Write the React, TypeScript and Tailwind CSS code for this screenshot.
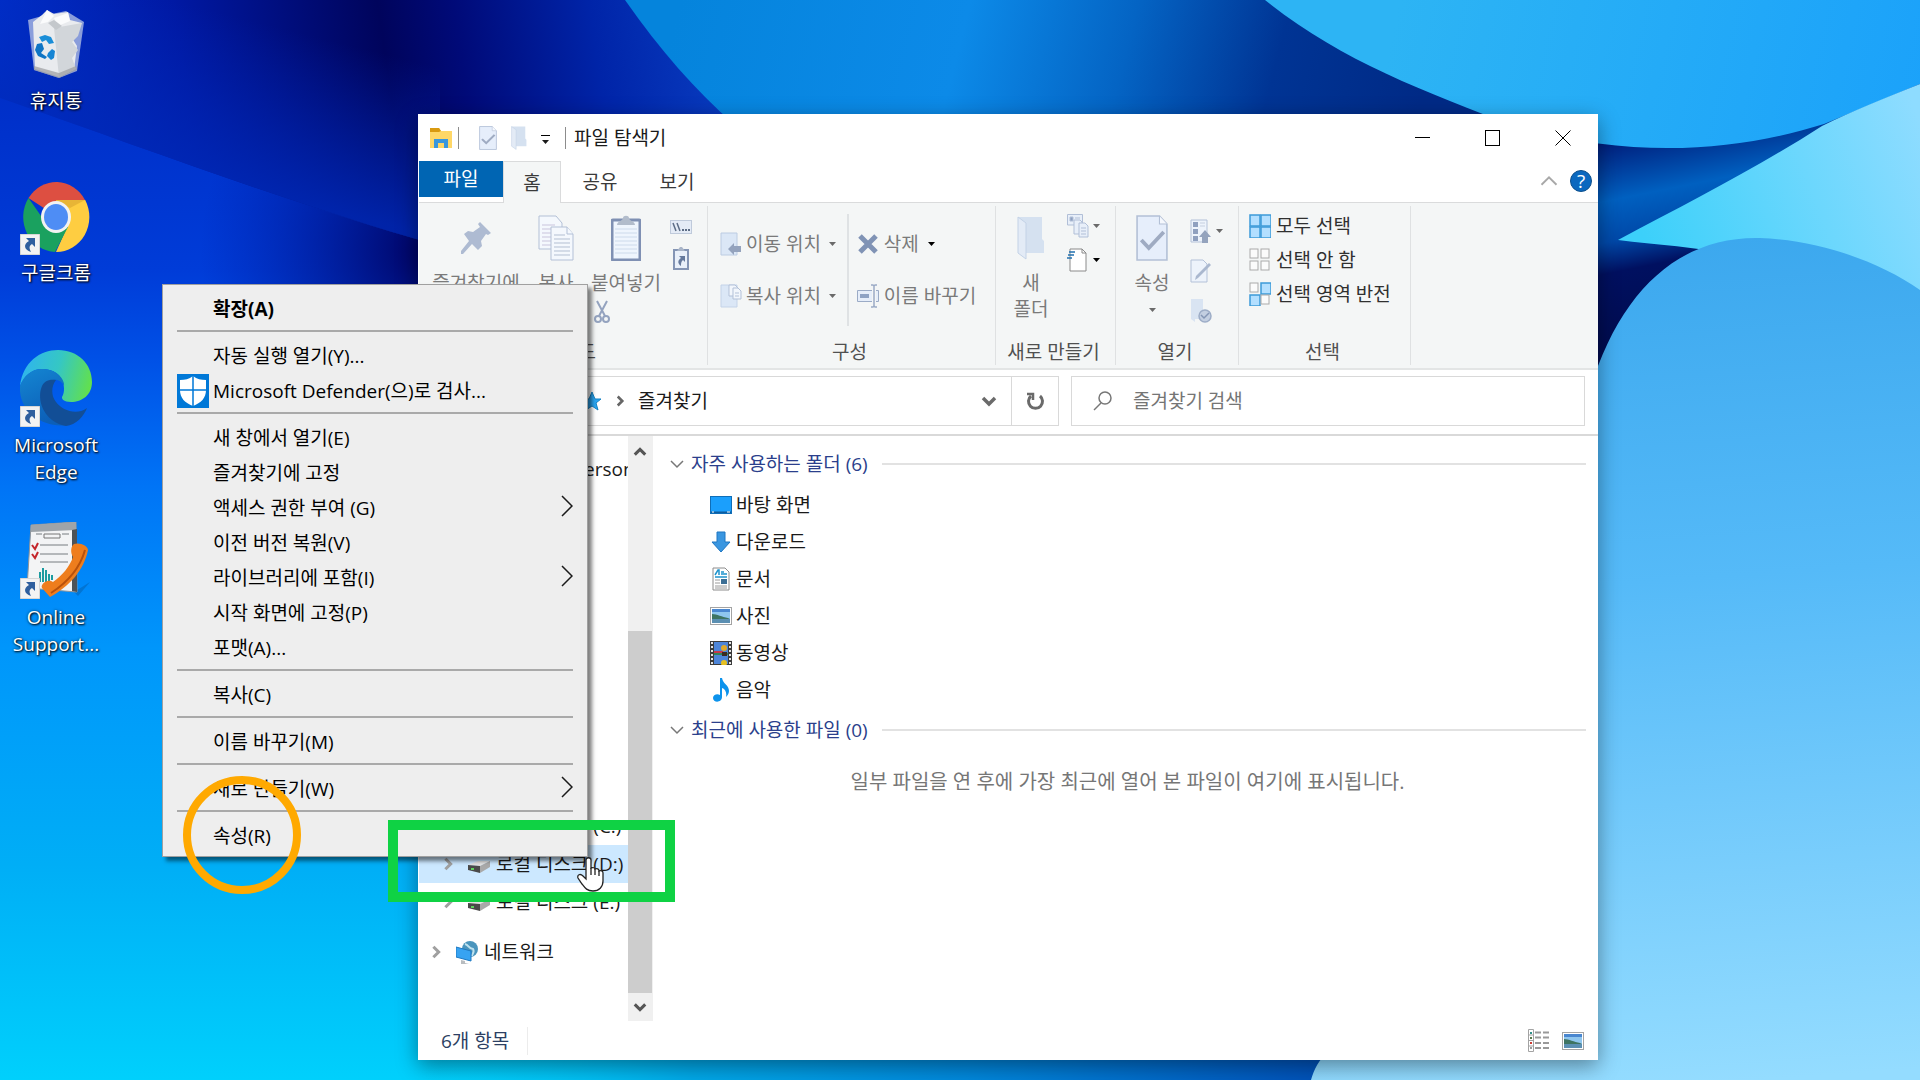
import * as React from 'react'
import { clsx } from 'clsx'

type IconProps = { className?: string }

function Wallpaper() {
  return (
    <svg
      aria-hidden="true"
      className="absolute inset-0 h-full w-full"
      viewBox="0 0 1920 1080"
      preserveAspectRatio="xMidYMid slice"
    >
      <defs>
        <linearGradient id="w-base" x1="0" y1="0" x2="0" y2="1">
          <stop offset="0" stopColor="#0028c0" />
          <stop offset="0.25" stopColor="#003cd8" />
          <stop offset="0.33" stopColor="#0050e6" />
          <stop offset="0.45" stopColor="#0074f6" />
          <stop offset="0.6" stopColor="#0096fb" />
          <stop offset="0.8" stopColor="#00aef6" />
          <stop offset="1" stopColor="#00d0fc" />
        </linearGradient>
        <linearGradient id="w-top" gradientUnits="userSpaceOnUse" x1="0" y1="110" x2="740" y2="0">
          <stop offset="0" stopColor="#0030cc" />
          <stop offset="0.25" stopColor="#0019a4" />
          <stop offset="0.52" stopColor="#00045c" />
          <stop offset="0.62" stopColor="#000a78" />
          <stop offset="0.8" stopColor="#0024a8" />
          <stop offset="1" stopColor="#0a40c4" />
        </linearGradient>
        <linearGradient id="w-top-lift" gradientUnits="userSpaceOnUse" x1="330" y1="40" x2="290" y2="200">
          <stop offset="0" stopColor="#0028b8" stopOpacity="0" />
          <stop offset="1" stopColor="#002ab8" stopOpacity="0.8" />
        </linearGradient>
        <radialGradient id="w-shade" gradientUnits="userSpaceOnUse" cx="430" cy="250" r="230">
          <stop offset="0" stopColor="#00005c" />
          <stop offset="1" stopColor="#0018a0" stopOpacity="0" />
        </radialGradient>
        <linearGradient id="w-mid" gradientUnits="userSpaceOnUse" x1="680" y1="0" x2="1400" y2="180">
          <stop offset="0" stopColor="#0584dc" />
          <stop offset="0.38" stopColor="#0c8ae8" />
          <stop offset="0.6" stopColor="#0464c4" />
          <stop offset="0.8" stopColor="#003494" />
          <stop offset="1" stopColor="#002a86" />
        </linearGradient>
        <linearGradient id="w-azure" gradientUnits="userSpaceOnUse" x1="1400" y1="0" x2="1920" y2="120">
          <stop offset="0" stopColor="#2db4f4" />
          <stop offset="1" stopColor="#1ba2fa" />
        </linearGradient>
        <linearGradient id="w-dark" gradientUnits="userSpaceOnUse" x1="1600" y1="140" x2="1640" y2="340">
          <stop offset="0" stopColor="#001a78" />
          <stop offset="0.3" stopColor="#0060c0" />
          <stop offset="0.5" stopColor="#0048a8" />
          <stop offset="0.65" stopColor="#001060" />
          <stop offset="1" stopColor="#000c50" />
        </linearGradient>
        <linearGradient id="w-wedge" gradientUnits="userSpaceOnUse" x1="1640" y1="230" x2="1920" y2="120">
          <stop offset="0" stopColor="#3cd0fa" />
          <stop offset="1" stopColor="#8edcff" />
        </linearGradient>
        <linearGradient id="w-right" gradientUnits="userSpaceOnUse" x1="1700" y1="240" x2="1760" y2="1080">
          <stop offset="0" stopColor="#3ca8ee" />
          <stop offset="0.4" stopColor="#55baf8" />
          <stop offset="1" stopColor="#94dcff" />
        </linearGradient>
        <linearGradient id="w-foot" x1="0" y1="0" x2="1" y2="0">
          <stop offset="0" stopColor="#00c8f8" stopOpacity="0" />
          <stop offset="0.3" stopColor="#00a8e8" />
          <stop offset="0.6" stopColor="#0088dc" />
          <stop offset="1" stopColor="#0050b8" />
        </linearGradient>
      </defs>
      <rect width="1920" height="1080" fill="url(#w-base)" />
      <path d="M0 98C150 150 280 200 440 246V480H200Z" fill="url(#w-shade)" />
      <path d="M0 98V0H760V300L440 246C280 200 150 150 0 98Z" fill="url(#w-top)" />
      <path d="M0 98V0H440V246C280 200 150 150 0 98Z" fill="url(#w-top-lift)" />
      <path d="M625 0C660 50 695 90 735 125H1600V0Z" fill="url(#w-mid)" />
      <path d="M1590 60H1920V400H1590Z" fill="url(#w-dark)" />
      <path d="M1265 0C1340 60 1420 90 1520 128C1640 160 1740 150 1824 124L1920 84V0Z" fill="url(#w-azure)" />
      <path d="M1920 84C1885 98 1850 112 1822 126C1760 166 1690 202 1618 240C1700 250 1800 250 1920 330Z" fill="url(#w-wedge)" />
      <path d="M1590 390C1620 290 1680 236 1760 238C1820 240 1880 262 1920 290V1080H1300L1310 1040Z" fill="url(#w-right)" />
      <path d="M420 1050H1330C1318 1060 1314 1070 1311 1080H420Z" fill="url(#w-foot)" />
    </svg>
  )
}

function RecycleBinIcon() {
  return (
    <svg aria-hidden="true" className="h-[72px] w-[72px]" viewBox="0 0 72 72">
      <path d="M8 12L22 8L46 3L64 14L57 63L39 70L14 62Z" fill="#b8c6e6" opacity="0.75" />
      <path d="M13 14L22 7L27 2L34 6L48 4L50 12L62 15L52 30L57 38L54 62L39 69L15 61Z" fill="#e9ebee" />
      <path d="M27 2L34 8L28 14L20 16Z M48 5L50 13L38 18L34 10Z" fill="#fafbfc" />
      <path d="M34 20L62 15L58 28L52 34L58 42L52 50L56 61L39 69Z" fill="#d2d6da" />
      <path d="M28 15L34 12L42 18L36 22Z" fill="#c4c8cc" />
      <path d="M14 62L39 70L57 62L56 58L39 65L14 58Z" fill="#9b9d9f" opacity="0.7" />
      <path d="M19 29L25 27L31 29L34 35L29 36L26 32L22 34Z" fill="#1a8ed8" />
      <path d="M17 36L22 35L24 41L21 45L27 49L25 51L18 48L15 42Z" fill="#0f74c4" />
      <path d="M28 45L32 41L35 43L34 50L31 52L27 48Z" fill="#1685d4" />
    </svg>
  )
}

function ChromeIcon() {
  return (
    <svg aria-hidden="true" className="h-[72px] w-[72px]" viewBox="0 0 72 72">
      <path d="M36 36L8.500 18A33 35 0 0 1 65 20Z" fill="#dd4f41" />
      <path d="M36 20H65.200A33 35 0 0 1 36 72L48 45Z" fill="#fecd41" />
      <path d="M8.500 18A33 35 0 0 0 35 72L48 47L28 46Z" fill="#1aa15f" />
      <path d="M36 20H65L50 28Z" fill="#d9a52f" opacity="0.6" />
      <ellipse cx="36" cy="37" rx="15" ry="16" fill="#f2f2f2" />
      <ellipse cx="36" cy="37" rx="12" ry="13" fill="#4e8df5" />
    </svg>
  )
}

function EdgeIcon() {
  return (
    <svg aria-hidden="true" className="h-[76px] w-[72px]" viewBox="0 0 72 76">
      <defs>
        <linearGradient id="e-top" x1="0" y1="0.4" x2="1" y2="0.6">
          <stop offset="0" stopColor="#2fb4ee" />
          <stop offset="0.5" stopColor="#35c7c4" />
          <stop offset="1" stopColor="#63e04c" />
        </linearGradient>
        <linearGradient id="e-mid" x1="0" y1="0" x2="0.4" y2="1">
          <stop offset="0" stopColor="#1486d2" />
          <stop offset="1" stopColor="#0c5fb8" />
        </linearGradient>
      </defs>
      <path d="M0 36C3 12 20 0 38 0C58 0 72 14 72 32C72 45 62 52 51 52C44 52 40 49 43 45C46 39 44 20 24 19C12 18 4 26 0 36Z" fill="url(#e-top)" />
      <path d="M0 36C4 24 14 18 24 19C38 20 45 30 44 36C42 31 37 29 33 30C24 32 20 42 24 54C28 66 38 74 48 75C22 79 -2 60 0 36Z" fill="url(#e-mid)" />
      <path d="M22 36C16 50 24 72 46 76C56 75 64 66 67 58C56 66 42 60 36 52C31 46 31 36 36 30C28 29 24 32 22 36Z" fill="#124e96" />
    </svg>
  )
}

function SupportIcon() {
  return (
    <svg aria-hidden="true" className="h-[76px] w-[72px]" viewBox="0 0 72 76">
      <path d="M54 70L70 60L58 74Z" fill="#045fae" opacity="0.5" />
      <path d="M11 3L56 0L57 70L7 66Z" fill="#f3f4f5" stroke="#8f9499" />
      <path d="M11 3L56 0V8L11 10Z" fill="#9ea4a9" />
      <path d="M52 8L57 7V70L52 69Z" fill="#4d5358" />
      <path d="M24 12H40V16H24Z" fill="none" stroke="#777" />
      <path d="M16 12H22M42 12H49M20 23H48M20 32H48M20 40H48" stroke="#777c80" />
      <path d="M12 23L15 27L18 21M12 32L15 36L18 30" fill="none" stroke="#c4262b" strokeWidth="2" />
      <path d="M20 60V50M23 60V46M26 62V48M29 60V52M32 58V53" stroke="#1b9ca0" strokeWidth="2" />
      <path d="M54 22C60 20 68 24 68 28C64 48 50 64 30 75L22 66C20 62 28 56 33 60C42 54 50 44 53 35C50 30 51 24 54 22Z" fill="#ee7d1d" />
      <path d="M65 28C60 46 48 60 31 71" fill="none" stroke="#b8510c" strokeWidth="2" />
    </svg>
  )
}

function ShortcutBadge() {
  return (
    <svg aria-hidden="true" className="absolute -bottom-[3px] left-0 h-[21px] w-5" viewBox="0 0 20 21">
      <rect width="20" height="21" fill="#f3f3f3" stroke="#b9b9b9" />
      <path d="M6 4H15V13L12 10C9 12 9 14 11 18C4 16 3 10 9 7Z" fill="#2f5f9e" />
    </svg>
  )
}

const DESKTOP_ICONS = [
  { label: '휴지통', icon: <RecycleBinIcon />, shortcut: false },
  { label: '구글크롬', icon: <ChromeIcon />, shortcut: true },
  { label: 'Microsoft Edge', icon: <EdgeIcon />, shortcut: true },
  { label: 'Online Support...', icon: <SupportIcon />, shortcut: true },
]

function DesktopIcons() {
  return (
    <div className="relative flex w-28 flex-col">
      {DESKTOP_ICONS.map(({ label, icon, shortcut }) => (
        <button
          key={label}
          type="button"
          className="flex h-[172px] flex-col items-center gap-2 px-1 pt-2 leading-[27px] text-white [text-shadow:1px_1px_2px_#000,0_0_3px_rgba(0,0,0,0.6)]"
        >
          <span className="relative flex h-[72px] w-[72px] shrink-0 items-center justify-center">
            {icon}
            {shortcut && <ShortcutBadge />}
          </span>
          <span className="w-24">{label}</span>
        </button>
      ))}
    </div>
  )
}

function Caret({ className }: IconProps) {
  return (
    <svg aria-hidden="true" className={clsx('h-1 w-[7px] shrink-0', className)} viewBox="0 0 7 4" fill="currentColor">
      <path d="M0 0H7L3.500 4Z" />
    </svg>
  )
}

function Chevron({ className, thick }: IconProps & { thick?: boolean }) {
  return (
    <svg
      aria-hidden="true"
      className={clsx('shrink-0', className)}
      viewBox="0 0 16 16"
      fill="none"
      stroke="currentColor"
      strokeWidth={thick ? 3.5 : 1.5}
    >
      <path d="M2 5L8 11L14 5" />
    </svg>
  )
}

function ExplorerIcon() {
  return (
    <svg aria-hidden="true" className="h-5 w-[22px]" viewBox="0 0 22 20">
      <path d="M0 0H9L11 3H22V20H0Z" fill="#ffd767" />
      <path d="M0 0H9L11 3L9 4H0Z" fill="#d99a10" />
      <path d="M4 20V11H18V20H14V15H8V20Z" fill="#3a97dd" />
    </svg>
  )
}

function CheckDocIcon({ className }: IconProps) {
  return (
    <svg aria-hidden="true" className={className} viewBox="0 0 30 46" preserveAspectRatio="none">
      <path d="M1 1H22L29 9V45H1Z" fill="#e6eefb" stroke="#b3c0d6" strokeWidth="1.500" />
      <path d="M22 1V9H29" fill="#f5f8fd" stroke="#b3c0d6" />
      <path d="M5 25L12 33L26 17" fill="none" stroke="#9fabc2" strokeWidth="3.500" />
    </svg>
  )
}

function FolderIcon({ className }: IconProps) {
  return (
    <svg aria-hidden="true" className={className} viewBox="0 0 28 44" preserveAspectRatio="none">
      <path d="M1 1H25V23L27 25V37H9Z" fill="#d5e1f0" />
      <path d="M1 1L9 7V43L1 37Z" fill="#e3ebf6" stroke="#c3d2e6" />
    </svg>
  )
}

function PinIcon() {
  return (
    <svg aria-hidden="true" className="h-8 w-8" viewBox="0 0 32 32" fill="#aebbd2">
      <path d="M20 0L31 11L28 13L26 12L21 19L22 24L18 28L12 22L3 32L1 32V29L9 19L4 12L8 9L13 10L20 5L18 2Z" />
    </svg>
  )
}

function CopyIcon() {
  return (
    <svg aria-hidden="true" className="h-[46px] w-9" viewBox="0 0 36 46" fill="#f4f8fd" stroke="#b3c0d6">
      <path d="M1 1H18L24 8V34H1Z" />
      <path d="M4 10H17M4 14H20M4 18H20M4 22H20M4 26H20M4 30H20" stroke="#c9c4dc" />
      <path d="M13 12H29L35 19V45H13Z" />
      <path d="M29 12V19H35" />
      <path d="M16 20H27M16 24H32M16 28H32M16 32H32M16 36H32M16 40H32" stroke="#b3bfd2" />
    </svg>
  )
}

function PasteIcon() {
  return (
    <svg aria-hidden="true" className="h-[46px] w-[30px]" viewBox="0 0 30 46">
      <rect x="1" y="5" width="28" height="40" rx="1" fill="#eff5fd" stroke="#7f90b3" strokeWidth="3" />
      <path d="M4 14H26M4 18H26M4 22H26M4 26H26M4 30H26M4 34H26M4 38H26" stroke="#cddaeb" />
      <path d="M6 10C6 6 12 6 12 3C12 0 18 0 18 3C18 6 24 6 24 10Z" fill="#b2bccb" />
    </svg>
  )
}

function PathIcon() {
  return (
    <svg aria-hidden="true" className="h-[14px] w-[22px]" viewBox="0 0 22 14">
      <rect x="0.500" y="0.500" width="21" height="13" fill="#e4ebf6" stroke="#bfcadb" />
      <path d="M3 3L6 11M7 3L10 11" stroke="#5d6d86" strokeWidth="1.500" />
      <path d="M12 10H14M15 10H17M18 10H20" stroke="#5d6d86" strokeWidth="2" />
    </svg>
  )
}

function PasteShortcutIcon() {
  return (
    <svg aria-hidden="true" className="h-6 w-4" viewBox="0 0 16 24">
      <rect x="1" y="4" width="14" height="19" fill="#e9f0fa" stroke="#8495b5" strokeWidth="2" />
      <path d="M4 5L7 1H9L12 5Z" fill="#a9b5c8" />
      <path d="M6 10H12V16L10 14C8 16 8 17 8 20C4 17 5 14 8 12Z" fill="#667a9d" />
    </svg>
  )
}

function ScissorsIcon() {
  return (
    <svg aria-hidden="true" className="h-6 w-4" viewBox="0 0 16 24" fill="none" stroke="#94a3bf" strokeWidth="2">
      <path d="M3 1L11 16M13 1L5 16" />
      <circle cx="4" cy="19" r="3" />
      <circle cx="12" cy="19" r="3" />
    </svg>
  )
}

function MoveToIcon() {
  return (
    <svg aria-hidden="true" className="h-6 w-[22px] shrink-0" viewBox="0 0 22 24">
      <path d="M1 1H17V23H1Z" fill="#dbe7f6" stroke="#bccce2" />
      <path d="M8 17L14 11V14H21V20H14V23Z" fill="#94a3bd" />
    </svg>
  )
}

function CopyToIcon() {
  return (
    <svg aria-hidden="true" className="h-6 w-[22px] shrink-0" viewBox="0 0 22 24" stroke="#b3c1d8">
      <path d="M1 1H17V23H1Z" fill="#dbe7f6" stroke="#c4d3e8" />
      <path d="M9 1H15L18 4V12H9Z" fill="#f2f6fc" />
      <path d="M13 4H18L21 7V15H13Z" fill="#f2f6fc" />
      <path d="M15 9H19M15 12H19" />
    </svg>
  )
}

function DeleteIcon() {
  return (
    <svg aria-hidden="true" className="h-6 w-[22px] shrink-0" viewBox="0 0 22 24">
      <path d="M3 4L19 20M19 4L3 20" stroke="#8093b5" strokeWidth="5" />
    </svg>
  )
}

function RenameIcon() {
  return (
    <svg aria-hidden="true" className="h-6 w-[22px] shrink-0" viewBox="0 0 22 24" fill="none" stroke="#9babc6">
      <path d="M15 6.500H0.500V17.500H15M19 6.500H21.500V17.500H19" fill="#e6eefa" />
      <path d="M3 10H12V14H3Z" fill="#8fa3c4" stroke="none" />
      <path d="M14 1H16L17 2L18 1H20M17 2V22M14 23H16L17 22L18 23H20" strokeWidth="1.500" />
    </svg>
  )
}

function NewItemIcon() {
  return (
    <svg aria-hidden="true" className="h-6 w-[22px]" viewBox="0 0 22 24" stroke="#b1bfd7" fill="#e8eff9">
      <path d="M0.500 0.500H15.500V11H0.500Z" />
      <path d="M3 3H6V7H3ZM8 4H13" fill="#8ea0c0" />
      <path d="M7 6H13L15 8V20H7Z" />
      <path d="M12 9H18L21 12V23H12Z" />
      <path d="M14 14H19M14 17H19M14 20H19" />
    </svg>
  )
}

function EasyAccessIcon() {
  return (
    <svg aria-hidden="true" className="h-6 w-[22px]" viewBox="0 0 22 24">
      <path d="M3 1H15L19 5V23H3Z" fill="#fff" stroke="#8a8a8a" />
      <path d="M15 1V5H19" fill="none" stroke="#8a8a8a" />
      <path d="M2 4H8M1 7H7M0 10H5" stroke="#2372b0" strokeWidth="1.500" />
    </svg>
  )
}

function OpenIcon() {
  return (
    <svg aria-hidden="true" className="h-6 w-[22px]" viewBox="0 0 22 24">
      <path d="M1 1H17V23H1Z" fill="#edf3fb" stroke="#b3c1d8" />
      <path d="M3 3H8V8H3ZM3 10H8V15H3ZM3 17H8V22H3Z" fill="#8fa0bf" />
      <path d="M10 4H15M10 7H15" stroke="#c5cfdf" />
      <path d="M15 11L21 18H18V24H12V18H9Z" fill="#94a3bd" />
    </svg>
  )
}

function EditIcon() {
  return (
    <svg aria-hidden="true" className="h-6 w-[22px]" viewBox="0 0 22 24">
      <path d="M1 1H13L17 5V23H1Z" fill="#edf3fb" stroke="#b3c1d8" />
      <path d="M5 21L6 17L19 4L21 6L8 19Z" fill="#aab8cf" />
    </svg>
  )
}

function HistoryIcon() {
  return (
    <svg aria-hidden="true" className="h-6 w-[22px]" viewBox="0 0 22 24">
      <path d="M1 0H13V20H5V23L1 20Z" fill="#d9e4f2" />
      <circle cx="15" cy="17" r="6" fill="#c3cfe1" stroke="#9dadc7" strokeWidth="1.500" />
      <path d="M11 16L14 19L19 14" fill="none" stroke="#8496b5" strokeWidth="1.500" />
    </svg>
  )
}

// cells run top-left, top-right, bottom-left, bottom-right
function SelectIcon({ cells }: { cells: boolean[] }) {
  return (
    <svg aria-hidden="true" className="h-6 w-[22px] shrink-0" viewBox="0 0 22 24">
      {cells.map((on, i) => (
        <rect
          key={i}
          x={(i % 2) * 11 + 1}
          y={Math.floor(i / 2) * 12 + 1}
          width={on ? 10 : 8}
          height={on ? 11 : 9}
          fill={on ? '#b3dfff' : '#fbfbfb'}
          stroke={on ? '#3c9bd9' : '#aaaaaa'}
          strokeWidth={on ? 1.5 : 1}
        />
      ))}
    </svg>
  )
}

function TitleBar() {
  return (
    <div className="flex h-[47px] items-center">
      <div className="flex flex-1 items-center pl-[11px]">
        <ExplorerIcon />
        <span className="ml-[6px] h-[22px] w-px bg-[#8c8c8c]" />
        <button type="button" aria-label="속성" className="ml-5">
          <CheckDocIcon className="h-6 w-[18px]" />
        </button>
        <button type="button" aria-label="새 폴더" className="ml-[14px]">
          <FolderIcon className="h-6 w-4" />
        </button>
        <button
          type="button"
          aria-label="빠른 실행 도구 모음 사용자 지정"
          className="ml-[14px] flex w-[9px] flex-col items-center gap-1 pt-1"
        >
          <span className="h-px w-full bg-black" />
          <Caret />
        </button>
        <span className="ml-[15px] h-[22px] w-px bg-[#8c8c8c]" />
        <h1 className="ml-2">파일 탐색기</h1>
      </div>
      <div className="flex">
        <button type="button" aria-label="최소화" className="flex h-10 w-[70px] items-center justify-center">
          <span className="h-px w-[15px] bg-black" />
        </button>
        <button type="button" aria-label="최대화" className="flex h-10 w-[70px] items-center justify-center">
          <span className="h-4 w-[15px] border border-black" />
        </button>
        <button type="button" aria-label="닫기" className="flex h-10 w-[71px] items-center justify-center">
          <svg aria-hidden="true" className="h-4 w-4" viewBox="0 0 16 16" stroke="#000">
            <path d="M0.500 0.500L15.500 15.500M15.500 0.500L0.500 15.500" />
          </svg>
        </button>
      </div>
    </div>
  )
}

function RibbonTabs() {
  return (
    <div role="tablist" className="flex h-[42px] items-start border-b border-[#dadbdc] text-[#3a3a3a]">
      <button type="button" role="tab" className="h-9 w-[84px] bg-[#0065b3] text-white">
        파일
      </button>
      <button
        type="button"
        role="tab"
        aria-selected="true"
        className="h-[42px] w-[58px] border border-b-0 border-[#dadbdc] bg-[#f4f6f6]"
      >
        홈
      </button>
      <button type="button" role="tab" className="h-[42px] w-[78px]">
        공유
      </button>
      <button type="button" role="tab" className="h-[42px] w-[76px]">
        보기
      </button>
      <div className="ml-auto flex h-10 items-center gap-[11px] pr-[6px]">
        <button type="button" aria-label="리본 최소화">
          <Chevron className="h-5 w-5 rotate-180 text-[#a8a8a8]" />
        </button>
        <button
          type="button"
          aria-label="도움말"
          className="h-[22px] w-[22px] rounded-full border border-[#0c4f8c] bg-[#0b68bf] leading-5 text-white"
        >
          ?
        </button>
      </div>
    </div>
  )
}

function RibbonGroup({
  label,
  className,
  children,
}: {
  label: string
  className?: string
  children: React.ReactNode
}) {
  return (
    <section aria-label={label} className={clsx('my-[3px] flex flex-col border-r border-[#dfe1e2]', className)}>
      <div className="flex flex-1 items-start">{children}</div>
      <div className="pr-1 text-center leading-[26px] text-[#505050]">{label}</div>
    </section>
  )
}

function LargeButton({ icon, className, children }: { icon: React.ReactNode; className?: string; children: React.ReactNode }) {
  return (
    <button
      type="button"
      className={clsx('flex shrink-0 flex-col items-center leading-[26px] whitespace-nowrap text-[#7a7a7a]', className)}
    >
      <span className="my-2 flex h-12 items-center">{icon}</span>
      {children}
    </button>
  )
}

function SmallButton({
  icon,
  label,
  caret,
  className,
}: {
  icon: React.ReactNode
  label?: string
  caret?: string
  className?: string
}) {
  return (
    <button type="button" className={clsx('flex items-center gap-1 whitespace-nowrap', className)}>
      {icon}
      {label && <span>{label}</span>}
      {caret && <Caret className={clsx(label && 'ml-1', caret)} />}
    </button>
  )
}

function Ribbon() {
  return (
    <div className="flex h-[167px] border-b-2 border-[#e3e5e5] bg-[#f4f6f6]">
      <RibbonGroup label="클립보드" className="w-[289px] shrink-0">
        <LargeButton icon={<PinIcon />} className="ml-3 w-[90px]">
          <span>즐겨찾기에</span>
          <span>고정</span>
        </LargeButton>
        <LargeButton icon={<CopyIcon />} className="ml-[10px] w-[50px]">
          복사
        </LargeButton>
        <div className="ml-[7px] flex flex-col items-start">
          <LargeButton icon={<PasteIcon />} className="w-[76px]">
            붙여넣기
          </LargeButton>
          <button type="button" aria-label="잘라내기" className="mt-1 ml-[6px]">
            <ScissorsIcon />
          </button>
        </div>
        <div className="ml-[6px] flex flex-col items-center gap-3 pt-[14px]">
          <button type="button" aria-label="경로 복사">
            <PathIcon />
          </button>
          <button type="button" aria-label="바로 가기 붙여넣기">
            <PasteShortcutIcon />
          </button>
        </div>
      </RibbonGroup>

      <RibbonGroup label="구성" className="w-[288px] shrink-0 text-[#7a7a7a]">
        <div className="ml-3 flex flex-col items-start gap-6 pt-6">
          <SmallButton icon={<MoveToIcon />} label="이동 위치" caret="text-[#6a6a6a]" className="h-7" />
          <SmallButton icon={<CopyToIcon />} label="복사 위치" caret="text-[#6a6a6a]" className="h-7" />
        </div>
        <div className="mt-2 ml-[11px] h-28 w-[2px] bg-[#dfe2e4]" />
        <div className="ml-2 flex flex-col items-start gap-6 pt-6">
          <SmallButton icon={<DeleteIcon />} label="삭제" caret="text-black" className="h-7 gap-[5px]" />
          <SmallButton icon={<RenameIcon />} label="이름 바꾸기" className="h-7 gap-[5px]" />
        </div>
      </RibbonGroup>

      <RibbonGroup label="새로 만들기" className="w-[120px] shrink-0">
        <LargeButton icon={<FolderIcon className="h-11 w-7" />} className="ml-2 w-[54px]">
          <span>새</span>
          <span>폴더</span>
        </LargeButton>
        <div className="ml-[9px] flex flex-col gap-[10px] pt-2">
          <SmallButton icon={<NewItemIcon />} caret="text-[#6a6a6a]" />
          <SmallButton icon={<EasyAccessIcon />} caret="text-black" />
        </div>
      </RibbonGroup>

      <RibbonGroup label="열기" className="w-[123px] shrink-0">
        <LargeButton icon={<CheckDocIcon className="h-[46px] w-8" />} className="ml-3 w-[48px]">
          <span>속성</span>
          <Caret className="mt-3 text-[#6a6a6a]" />
        </LargeButton>
        <div className="ml-[14px] flex flex-col gap-4 pt-[13px]">
          <SmallButton icon={<OpenIcon />} caret="text-[#6a6a6a]" />
          <SmallButton icon={<EditIcon />} />
          <SmallButton icon={<HistoryIcon />} />
        </div>
      </RibbonGroup>

      <RibbonGroup label="선택" className="w-[172px] shrink-0 text-[#303030]">
        <div className="ml-[10px] flex flex-col items-start gap-[6px] pt-[6px]">
          <SmallButton icon={<SelectIcon cells={[true, true, true, true]} />} label="모두 선택" className="h-7 gap-[5px]" />
          <SmallButton icon={<SelectIcon cells={[false, false, false, false]} />} label="선택 안 함" className="h-7 gap-[5px]" />
          <SmallButton icon={<SelectIcon cells={[false, true, true, false]} />} label="선택 영역 반전" className="h-7 gap-[5px]" />
        </div>
      </RibbonGroup>
    </div>
  )
}

function AddressRow() {
  return (
    <div className="flex h-[66px] items-start gap-3 border-b-2 border-[#d9d9d9] pt-[6px] pr-[13px]">
      <div className="ml-[140px] flex h-[50px] w-[500px] border border-[#d9d9d9]">
        <nav aria-label="주소" className="flex flex-1 items-center gap-3 pl-5">
          <svg aria-hidden="true" className="h-5 w-[22px]" viewBox="0 0 20 20">
            <path d="M11 1L14 8L20 8L15 12L17 19L11 15L5 19L6 12L1 8H8Z" fill="#2ba6f2" stroke="#1583c4" />
          </svg>
          <Chevron thick className="h-3 w-3 -rotate-90 text-[#666]" />
          <a href="#favorites">즐겨찾기</a>
        </nav>
        <button type="button" aria-label="이전 위치" className="flex w-11 items-center justify-center">
          <Chevron thick className="h-4 w-4 text-[#6a6a6a]" />
        </button>
        <button
          type="button"
          aria-label="새로 고침"
          className="flex w-[47px] items-center justify-center border-l border-[#d9d9d9]"
        >
          <svg aria-hidden="true" className="h-5 w-5" viewBox="0 0 20 20" fill="none" stroke="#6a6a6a" strokeWidth="3">
            <path d="M15 5A7 7 0 1 1 6 5" />
            <path d="M2 3H8V9" strokeWidth="2.500" />
          </svg>
        </button>
      </div>
      <label className="flex h-[50px] flex-1 items-center gap-5 border border-[#d9d9d9] pl-[21px]">
        <svg aria-hidden="true" className="h-5 w-5" viewBox="0 0 20 20" fill="none" stroke="#777" strokeWidth="1.500">
          <circle cx="12" cy="7" r="6" />
          <path d="M8 12L1 19" />
        </svg>
        <input
          type="search"
          aria-label="즐겨찾기 검색"
          placeholder="즐겨찾기 검색"
          className="min-w-0 flex-1 outline-none placeholder:text-[#757575]"
        />
      </label>
    </div>
  )
}

function DriveIcon() {
  return (
    <svg aria-hidden="true" className="h-3 w-[22px] shrink-0" viewBox="0 0 22 12">
      <path d="M0 4L10 0H22L12 5Z" fill="#e2e2e2" />
      <path d="M0 4L12 5V12L0 9Z" fill="#4a4a4a" />
      <path d="M12 5L22 0V6L12 12Z" fill="#a9a9a9" />
      <path d="M3 7H6V9H3Z" fill="#5fd35f" />
    </svg>
  )
}

function NetworkIcon() {
  return (
    <svg aria-hidden="true" className="h-6 w-[22px] shrink-0" viewBox="0 0 22 24">
      <circle cx="14" cy="9" r="8" fill="#4a95bd" />
      <path d="M9 4C13 5 12 8 17 9C19 12 16 14 16 16" fill="none" stroke="#bfe2ef" strokeWidth="2" />
      <path d="M0 7L15 11V21L0 17Z" fill="#37a3f2" stroke="#1f78c0" />
      <path d="M5 20L9 21V23L13 24H5Z" fill="#b9bdc0" />
    </svg>
  )
}

const DRIVES = ['C', 'D', 'E']

function NavPane() {
  return (
    <div className="flex w-[233px] shrink-0">
      <nav aria-label="탐색 창" className="flex flex-1 flex-col overflow-hidden whitespace-nowrap">
        <a href="#onedrive" className="mt-[14px] pl-[54px] leading-[38px]">
          OneDrive - Personal
        </a>
        <div className="mt-auto mb-[50px] flex flex-col">
          {DRIVES.map((drive) => (
            <a
              key={drive}
              href={`#${drive}`}
              aria-current={drive === 'D'}
              className="flex h-[38px] items-center pl-[22px] aria-[current=true]:bg-[#cce8ff]"
            >
              <Chevron thick className="h-[14px] w-[14px] -rotate-90 text-[#a0a0a0]" />
              <span className="mr-[6px] ml-[13px] pt-[6px]">
                <DriveIcon />
              </span>
              로컬 디스크 ({drive}:)
            </a>
          ))}
          <a href="#network" className="mt-3 flex h-[38px] items-center pl-[10px]">
            <Chevron thick className="h-[14px] w-[14px] -rotate-90 text-[#a0a0a0]" />
            <span className="mr-[6px] ml-[13px]">
              <NetworkIcon />
            </span>
            네트워크
          </a>
        </div>
      </nav>
      <div className="flex w-6 shrink-0 flex-col bg-[#f0f0f0] text-[#555]">
        <button type="button" aria-label="위로 스크롤" className="flex h-8 items-center justify-center">
          <Chevron thick className="h-[14px] w-[14px] rotate-180" />
        </button>
        <div className="flex flex-1 flex-col justify-end">
          <div className="h-[69%] bg-[#cdcdcd]" />
        </div>
        <button type="button" aria-label="아래로 스크롤" className="flex h-7 items-center justify-center">
          <Chevron thick className="h-[14px] w-[14px]" />
        </button>
      </div>
    </div>
  )
}

function PictureIcon() {
  return (
    <svg aria-hidden="true" className="h-[18px] w-[22px]" viewBox="0 0 22 18">
      <rect x="0.500" y="0.500" width="21" height="17" fill="#fff" stroke="#a3a3a3" />
      <path d="M2 2H20V16H2Z" fill="#8fc6ee" />
      <path d="M2 2H20V5H2Z" fill="#4a87d0" />
      <path d="M2 7C7 7 12 10 18 11L20 12H2Z" fill="#3e7462" />
      <path d="M2 12H20V16H2Z" fill="#5b8fb2" />
    </svg>
  )
}

const FOLDERS = [
  {
    name: '바탕 화면',
    icon: (
      <svg aria-hidden="true" className="h-[18px] w-[22px]" viewBox="0 0 22 18">
        <rect x="0.500" y="0.500" width="21" height="17" fill="#1b9ffc" stroke="#0f6eb8" />
        <path d="M1 15.500H21V17H1Z" fill="#0e5c9e" />
        <path d="M2 16H4M17 16H20" stroke="#fff" />
      </svg>
    ),
  },
  {
    name: '다운로드',
    icon: (
      <svg aria-hidden="true" className="h-[22px] w-[22px]" viewBox="0 0 22 22">
        <path d="M7 1H15V11H20L11 21L2 11H7Z" fill="#3a96e0" stroke="#1f76c2" />
      </svg>
    ),
  },
  {
    name: '문서',
    icon: (
      <svg aria-hidden="true" className="h-6 w-[22px]" viewBox="0 0 22 24">
        <path d="M3 1H15L19 5V23H3Z" fill="#fff" stroke="#8c8c8c" />
        <path d="M5 8L8 3H9V8M11 5H14M11 7H17M5 10H17" fill="none" stroke="#1f93cc" strokeWidth="1.500" />
        <path d="M5 13H10M5 16H10M5 19H17M5 21H17" stroke="#9a9a9a" />
        <path d="M11 12H17V17H11Z" fill="#3c6f95" />
      </svg>
    ),
  },
  { name: '사진', icon: <PictureIcon /> },
  {
    name: '동영상',
    icon: (
      <svg aria-hidden="true" className="h-6 w-[22px]" viewBox="0 0 22 24">
        <path d="M0 0H22V24H0Z" fill="#3b3b3b" />
        <path d="M4 1H18V23H4Z" fill="#4d85d8" />
        <path d="M2 1V24M20 1V24" stroke="#e6e6e6" strokeWidth="2" strokeDasharray="2 2" />
        <path d="M4 10H13V13H4Z" fill="#c8384c" />
        <path d="M4 12H18V14H4Z" fill="#31845a" />
        <circle cx="14" cy="7" r="3" fill="#e0a92a" />
        <path d="M12 11H17V15H12Z" fill="#3c2a20" />
        <circle cx="14" cy="22" r="3" fill="#e5c023" />
      </svg>
    ),
  },
  {
    name: '음악',
    icon: (
      <svg aria-hidden="true" className="h-6 w-[22px]" viewBox="0 0 22 24">
        <path d="M10 0H12C13 6 19 7 19 13C19 16 17 18 16 19C17 14 15 11 12 10V19C12 25 3 25 3 20C3 17 7 15 10 17Z" fill="#0d93ec" />
      </svg>
    ),
  },
]

function SectionHeader({ children }: { children: React.ReactNode }) {
  return (
    <h2 className="flex h-11 items-center text-[#2b3f8c]">
      <button type="button" className="flex items-center gap-[6px]">
        <Chevron className="h-4 w-4 text-[#777]" />
        {children}
      </button>
      <span className="ml-[14px] h-[2px] flex-1 bg-[#e2e2e2]" />
    </h2>
  )
}

function FolderView() {
  return (
    <main className="flex-1 border-l border-[#f0f0f0] pt-[6px] pr-3 pl-4">
      <SectionHeader>자주 사용하는 폴더 (6)</SectionHeader>
      <ul className="pl-[41px]">
        {FOLDERS.map(({ name, icon }) => (
          <li key={name}>
            <a href={`#${name}`} className="flex h-[37px] items-center gap-1">
              {icon}
              {name}
            </a>
          </li>
        ))}
      </ul>
      <SectionHeader>최근에 사용한 파일 (0)</SectionHeader>
      <p className="mt-4 text-center text-[20px] text-[#767676]">
        일부 파일을 연 후에 가장 최근에 열어 본 파일이 여기에 표시됩니다.
      </p>
    </main>
  )
}

function StatusBar() {
  return (
    <footer className="flex h-[39px] items-center pr-[14px] pl-[22px] text-[#2c3f63]">
      <span className="border-r border-[#ececec] pr-[18px]">6개 항목</span>
      <div className="ml-auto flex items-center gap-3">
        <button type="button" aria-label="자세히">
          <svg aria-hidden="true" className="h-[23px] w-[22px]" viewBox="0 0 22 23">
            <path d="M0.500 0.500H5.500V22.500H0.500ZM0.500 6H5.500M0.500 11.500H5.500M0.500 17H5.500" fill="#fff" stroke="#a3a3a3" />
            <path d="M2 3H4V5H2Z" fill="#2f8f8a" />
            <path d="M2 8H4V10H2Z" fill="#5a7a4a" />
            <path d="M2 13H4V15H2Z" fill="#cc3b33" />
            <path d="M2 18H4V20H2Z" fill="#999" />
            <path d="M7 3.500H13M15 3.500H21M7 8.500H13M15 8.500H21M7 14H13M15 14H21M7 19H13M15 19H21" stroke="#999" strokeWidth="2" />
          </svg>
        </button>
        <button type="button" aria-label="큰 아이콘">
          <PictureIcon />
        </button>
      </div>
    </footer>
  )
}

function ExplorerWindow() {
  return (
    <div className="absolute top-[114px] right-[322px] left-[418px] flex flex-col bg-white pl-px shadow-[0_6px_20px_rgba(0,0,0,0.4)]">
      <TitleBar />
      <RibbonTabs />
      <Ribbon />
      <AddressRow />
      <div className="flex min-h-[585px]">
        <NavPane />
        <FolderView />
      </div>
      <StatusBar />
    </div>
  )
}

type MenuEntry = { label: string; bold?: boolean; submenu?: boolean; icon?: React.ReactNode }

const MENU: MenuEntry[][] = [
  [{ label: '확장(A)', bold: true }],
  [
    { label: '자동 실행 열기(Y)...' },
    {
      label: 'Microsoft Defender(으)로 검사...',
      icon: (
        <svg aria-hidden="true" className="h-[34px] w-8" viewBox="0 0 32 34">
          <rect width="32" height="34" fill="#0078d7" />
          <path d="M16 2C20 5 24 6 29 6V16C29 24 24 29 16 32C8 29 3 24 3 16V6C8 6 12 5 16 2Z" fill="#fff" />
          <path d="M16 1V33M2 16H30" stroke="#0078d7" strokeWidth="1.500" />
        </svg>
      ),
    },
  ],
  [
    { label: '새 창에서 열기(E)' },
    { label: '즐겨찾기에 고정' },
    { label: '액세스 권한 부여 (G)', submenu: true },
    { label: '이전 버전 복원(V)' },
    { label: '라이브러리에 포함(I)', submenu: true },
    { label: '시작 화면에 고정(P)' },
    { label: '포맷(A)...' },
  ],
  [{ label: '복사(C)' }],
  [{ label: '이름 바꾸기(M)' }],
  [{ label: '새로 만들기(W)', submenu: true }],
  [{ label: '속성(R)' }],
]

function ContextMenu() {
  return (
    <div
      role="menu"
      className="absolute top-[284px] left-[162px] w-[426px] border border-[#a0a0a0] bg-[#eeeeee] px-[14px] pt-[6px] pb-[3px] text-black shadow-[4px_4px_4px_rgba(0,0,0,0.5)]"
    >
      {MENU.map((group, i) => (
        <React.Fragment key={i}>
          {i > 0 && <hr className="mt-1 mb-[6px] h-[2px] border-0 bg-[#a9a9a9]" />}
          {group.map(({ label, bold, submenu, icon }) => (
            <button
              key={label}
              type="button"
              role="menuitem"
              className={clsx('flex h-[35px] w-full items-center whitespace-nowrap', bold && 'font-bold')}
            >
              <span className="mr-1 w-8 shrink-0">{icon}</span>
              {label}
              {submenu && (
                <svg
                  aria-hidden="true"
                  className="mb-[3px] ml-auto h-[22px] w-3"
                  viewBox="0 0 12 22"
                  fill="none"
                  stroke="#1a1a1a"
                  strokeWidth="1.500"
                >
                  <path d="M1 1L11 11L1 21" />
                </svg>
              )}
            </button>
          ))}
        </React.Fragment>
      ))}
    </div>
  )
}

function Annotations() {
  return (
    <div aria-hidden="true" className="pointer-events-none">
      <div className="absolute top-[776px] left-[183px] h-[118px] w-[118px] rounded-full border-8 border-[#ffa900]" />
      <div className="absolute top-[820px] left-[388px] h-[82px] w-[287px] border-10 border-[#0fd244]" />
      <svg className="absolute top-[857px] left-[577px] h-[35px] w-[27px]" viewBox="0 0 27 35">
        <path
          d="M9 3C9 0 14 0 14 3V11C16 10 18 11 18 12C20 11 22 12 22 14C24 13 26 14 26 16V24C26 30 22 34 16 34C10 34 8 31 5 27L1 21C0 18 3 16 6 19L9 22Z"
          fill="#fff"
          stroke="#222"
          strokeWidth="1.300"
        />
        <path d="M14 11V18M18 12V18M22 14V19" stroke="#222" strokeWidth="1.300" />
      </svg>
    </div>
  )
}

export default function App() {
  return (
    <div className="relative min-h-screen overflow-hidden bg-[#0098fb] font-['Open_Sans','Noto_Sans_CJK_KR',sans-serif] text-[19px] leading-7 text-[#1a1a1a]">
      <Wallpaper />
      <DesktopIcons />
      <ExplorerWindow />
      <ContextMenu />
      <Annotations />
    </div>
  )
}
